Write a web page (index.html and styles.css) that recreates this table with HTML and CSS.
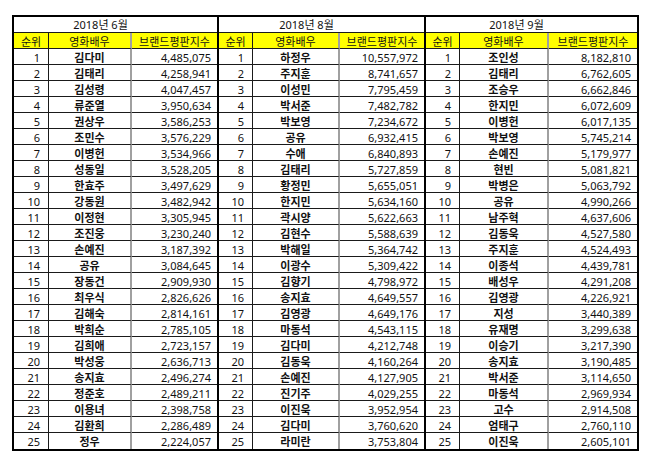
FILE: index.html
```html
<!DOCTYPE html>
<html lang="ko">
<head>
<meta charset="utf-8">
<title>영화배우 브랜드평판지수</title>
<link rel="stylesheet" href="styles.css">
</head>
<body>
<div class="sheet">
  <div class="blk b1">
    <div class="ttl">2018년 6월</div>
    <div class="hd h1">순위</div><div class="hd h2">영화배우</div><div class="hd h3">브랜드평판지수</div>
    <div class="rk">1</div><div class="nm">김다미</div><div class="sc">4,485,075</div>
    <div class="rk">2</div><div class="nm">김태리</div><div class="sc">4,258,941</div>
    <div class="rk">3</div><div class="nm">김성령</div><div class="sc">4,047,457</div>
    <div class="rk">4</div><div class="nm">류준열</div><div class="sc">3,950,634</div>
    <div class="rk">5</div><div class="nm">권상우</div><div class="sc">3,586,253</div>
    <div class="rk">6</div><div class="nm">조민수</div><div class="sc">3,576,229</div>
    <div class="rk">7</div><div class="nm">이병헌</div><div class="sc">3,534,966</div>
    <div class="rk">8</div><div class="nm">성동일</div><div class="sc">3,528,205</div>
    <div class="rk">9</div><div class="nm">한효주</div><div class="sc">3,497,629</div>
    <div class="rk">10</div><div class="nm">강동원</div><div class="sc">3,482,942</div>
    <div class="rk">11</div><div class="nm">이정현</div><div class="sc">3,305,945</div>
    <div class="rk">12</div><div class="nm">조진웅</div><div class="sc">3,230,240</div>
    <div class="rk">13</div><div class="nm">손예진</div><div class="sc">3,187,392</div>
    <div class="rk">14</div><div class="nm">공유</div><div class="sc">3,084,645</div>
    <div class="rk">15</div><div class="nm">장동건</div><div class="sc">2,909,930</div>
    <div class="rk">16</div><div class="nm">최우식</div><div class="sc">2,826,626</div>
    <div class="rk">17</div><div class="nm">김해숙</div><div class="sc">2,814,161</div>
    <div class="rk">18</div><div class="nm">박희순</div><div class="sc">2,785,105</div>
    <div class="rk">19</div><div class="nm">김희애</div><div class="sc">2,723,157</div>
    <div class="rk">20</div><div class="nm">박성웅</div><div class="sc">2,636,713</div>
    <div class="rk">21</div><div class="nm">송지효</div><div class="sc">2,496,274</div>
    <div class="rk">22</div><div class="nm">정준호</div><div class="sc">2,489,211</div>
    <div class="rk">23</div><div class="nm">이용녀</div><div class="sc">2,398,758</div>
    <div class="rk">24</div><div class="nm">김환희</div><div class="sc">2,286,489</div>
    <div class="rk">25</div><div class="nm">정우</div><div class="sc">2,224,057</div>
  </div>
  <div class="blk b2">
    <div class="ttl">2018년 8월</div>
    <div class="hd h1">순위</div><div class="hd h2">영화배우</div><div class="hd h3">브랜드평판지수</div>
    <div class="rk">1</div><div class="nm">하정우</div><div class="sc">10,557,972</div>
    <div class="rk">2</div><div class="nm">주지훈</div><div class="sc">8,741,657</div>
    <div class="rk">3</div><div class="nm">이성민</div><div class="sc">7,795,459</div>
    <div class="rk">4</div><div class="nm">박서준</div><div class="sc">7,482,782</div>
    <div class="rk">5</div><div class="nm">박보영</div><div class="sc">7,234,672</div>
    <div class="rk">6</div><div class="nm">공유</div><div class="sc">6,932,415</div>
    <div class="rk">7</div><div class="nm">수애</div><div class="sc">6,840,893</div>
    <div class="rk">8</div><div class="nm">김태리</div><div class="sc">5,727,859</div>
    <div class="rk">9</div><div class="nm">황정민</div><div class="sc">5,655,051</div>
    <div class="rk">10</div><div class="nm">한지민</div><div class="sc">5,634,160</div>
    <div class="rk">11</div><div class="nm">곽시양</div><div class="sc">5,622,663</div>
    <div class="rk">12</div><div class="nm">김현수</div><div class="sc">5,588,639</div>
    <div class="rk">13</div><div class="nm">박해일</div><div class="sc">5,364,742</div>
    <div class="rk">14</div><div class="nm">이광수</div><div class="sc">5,309,422</div>
    <div class="rk">15</div><div class="nm">김향기</div><div class="sc">4,798,972</div>
    <div class="rk">16</div><div class="nm">송지효</div><div class="sc">4,649,557</div>
    <div class="rk">17</div><div class="nm">김영광</div><div class="sc">4,649,176</div>
    <div class="rk">18</div><div class="nm">마동석</div><div class="sc">4,543,115</div>
    <div class="rk">19</div><div class="nm">김다미</div><div class="sc">4,212,748</div>
    <div class="rk">20</div><div class="nm">김동욱</div><div class="sc">4,160,264</div>
    <div class="rk">21</div><div class="nm">손예진</div><div class="sc">4,127,905</div>
    <div class="rk">22</div><div class="nm">진기주</div><div class="sc">4,029,255</div>
    <div class="rk">23</div><div class="nm">이진욱</div><div class="sc">3,952,954</div>
    <div class="rk">24</div><div class="nm">김다미</div><div class="sc">3,760,620</div>
    <div class="rk">25</div><div class="nm">라미란</div><div class="sc">3,753,804</div>
  </div>
  <div class="blk b3">
    <div class="ttl">2018년 9월</div>
    <div class="hd h1">순위</div><div class="hd h2">영화배우</div><div class="hd h3">브랜드평판지수</div>
    <div class="rk">1</div><div class="nm">조인성</div><div class="sc">8,182,810</div>
    <div class="rk">2</div><div class="nm">김태리</div><div class="sc">6,762,605</div>
    <div class="rk">3</div><div class="nm">조승우</div><div class="sc">6,662,846</div>
    <div class="rk">4</div><div class="nm">한지민</div><div class="sc">6,072,609</div>
    <div class="rk">5</div><div class="nm">이병헌</div><div class="sc">6,017,135</div>
    <div class="rk">6</div><div class="nm">박보영</div><div class="sc">5,745,214</div>
    <div class="rk">7</div><div class="nm">손예진</div><div class="sc">5,179,977</div>
    <div class="rk">8</div><div class="nm">현빈</div><div class="sc">5,081,821</div>
    <div class="rk">9</div><div class="nm">박병은</div><div class="sc">5,063,792</div>
    <div class="rk">10</div><div class="nm">공유</div><div class="sc">4,990,266</div>
    <div class="rk">11</div><div class="nm">남주혁</div><div class="sc">4,637,606</div>
    <div class="rk">12</div><div class="nm">김동욱</div><div class="sc">4,527,580</div>
    <div class="rk">13</div><div class="nm">주지훈</div><div class="sc">4,524,493</div>
    <div class="rk">14</div><div class="nm">이종석</div><div class="sc">4,439,781</div>
    <div class="rk">15</div><div class="nm">배성우</div><div class="sc">4,291,208</div>
    <div class="rk">16</div><div class="nm">김영광</div><div class="sc">4,226,921</div>
    <div class="rk">17</div><div class="nm">지성</div><div class="sc">3,440,389</div>
    <div class="rk">18</div><div class="nm">유재명</div><div class="sc">3,299,638</div>
    <div class="rk">19</div><div class="nm">이승기</div><div class="sc">3,217,390</div>
    <div class="rk">20</div><div class="nm">송지효</div><div class="sc">3,190,485</div>
    <div class="rk">21</div><div class="nm">박서준</div><div class="sc">3,114,650</div>
    <div class="rk">22</div><div class="nm">마동석</div><div class="sc">2,969,934</div>
    <div class="rk">23</div><div class="nm">고수</div><div class="sc">2,914,508</div>
    <div class="rk">24</div><div class="nm">엄태구</div><div class="sc">2,760,110</div>
    <div class="rk">25</div><div class="nm">이진욱</div><div class="sc">2,605,101</div>
  </div>
</div>
</body>
</html>
```
FILE: styles.css
```css
html, body {
  margin: 0;
  padding: 0;
  background: #fff;
}
body {
  font-family: "Noto Sans", "Noto Sans CJK KR", sans-serif;
  font-size: 11px;
  color: #111;
}
.sheet {
  display: flex;
  align-items: flex-start;
  padding: 15px 0 0 12px;
}
.blk {
  display: grid;
  grid-auto-rows: 16px;
  border: 2px solid #000;
}
.blk + .blk {
  border-left: 0;
}
.b1 { grid-template-columns: 35px 83px 85px; }
.b2 { grid-template-columns: 34px 87px 84px; }
.b3 { grid-template-columns: 34px 89px 88px; }

.blk > div {
  box-sizing: border-box;
  border-bottom: 1px solid #1a1a1a;
  line-height: 15px;
  white-space: nowrap;
}
.blk > div:nth-last-child(-n+3) {
  border-bottom: 0;
}
.hd, .rk, .nm, .sc {
  padding-top: 1px;
}
.ttl {
  grid-column: 1 / -1;
  text-align: center;
  padding-right: 30px;
}
.hd {
  background: #ffff00;
  text-align: center;
}
.h1, .rk {
  border-right: 1px solid #1a1a1a;
}
.h2, .nm {
  border-right: 2px solid #a0a0a0;
}
.rk {
  text-align: right;
  padding-right: 8px;
}
.nm {
  text-align: center;
  font-weight: 700;
}
.sc {
  text-align: right;
  padding-right: 6px;
}
```
